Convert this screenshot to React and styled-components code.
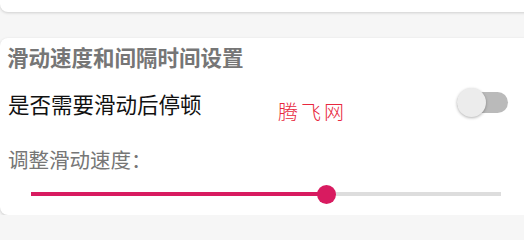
import React, { useState } from "react";
import styled, { createGlobalStyle } from "styled-components";

const GlobalStyle = createGlobalStyle`
  html, body {
    margin: 0;
    padding: 0;
    overflow: hidden;
    background: #f6f6f6;
    font-family: "Noto Sans CJK SC", "Noto Sans", sans-serif;
  }
`;

const Page = styled.div`
  display: flex;
  flex-direction: column;
  gap: 26px;
  width: 548px;
`;

const TopCard = styled.div`
  height: 12px;
  background: #ffffff;
  border-radius: 0 0 8px 8px;
  box-shadow: 0 1px 3px rgba(0, 0, 0, 0.16);
`;

const Card = styled.section`
  position: relative;
  background: #ffffff;
  border-radius: 8px;
  box-shadow: 0 1px 3px rgba(0, 0, 0, 0.18);
  padding: 4px 40px 11px 7px;
  display: flex;
  flex-direction: column;
`;

const Title = styled.div`
  font-size: 21.5px;
  line-height: 30px;
  font-weight: 700;
  color: #767676;
`;

const Row = styled.div`
  display: flex;
  align-items: center;
  justify-content: space-between;
  height: 40px;
  margin-top: 12px;
  padding-left: 1px;
`;

const Label = styled.span`
  font-size: 21.5px;
  line-height: 30px;
  color: #111111;
`;

const SwitchTrack = styled.button`
  position: relative;
  width: 51px;
  height: 21px;
  margin-bottom: 4px;
  padding: 0;
  border: none;
  border-radius: 11px;
  background: ${(p) => (p.$on ? "#f08eb0" : "#bababa")};
  cursor: pointer;
`;

const SwitchThumb = styled.span`
  position: absolute;
  top: -4px;
  left: ${(p) => (p.$on ? "22px" : "0")};
  width: 29px;
  height: 29px;
  border-radius: 50%;
  background: ${(p) => (p.$on ? "#d81b60" : "#ececec")};
  box-shadow: 0 1px 3px rgba(0, 0, 0, 0.3);
`;

const SubLabel = styled.div`
  font-size: 20.5px;
  line-height: 30px;
  color: #767676;
  margin-top: 20px;
  padding-left: 1px;
`;

const SliderBox = styled.div`
  position: relative;
  width: 470px;
  height: 20px;
  margin: 10px 0 0 24px;
  display: flex;
  align-items: center;
`;

const Track = styled.div`
  position: relative;
  width: 100%;
  height: 4px;
  background: #dddddd;
`;

const Fill = styled.div`
  height: 100%;
  background: #d81b60;
`;

const Thumb = styled.div`
  position: absolute;
  top: 50%;
  width: 19px;
  height: 19px;
  margin: -9.5px 0 0 -9.5px;
  border-radius: 50%;
  background: #d81b60;
`;

const Watermark = styled.span`
  position: absolute;
  left: 278px;
  top: 63px;
  font-size: 20px;
  line-height: 22px;
  letter-spacing: 3px;
  font-weight: 300;
  color: #e8283e;
  pointer-events: none;
`;

export default function App() {
  const [pause, setPause] = useState(false);
  const value = 62.9;
  return (
    <>
      <GlobalStyle />
      <Page>
        <TopCard />
        <Card>
          <Title>滑动速度和间隔时间设置</Title>
          <Row>
            <Label>是否需要滑动后停顿</Label>
            <SwitchTrack $on={pause} onClick={() => setPause(!pause)} aria-label="toggle">
              <SwitchThumb $on={pause} />
            </SwitchTrack>
          </Row>
          <SubLabel>调整滑动速度：</SubLabel>
          <SliderBox>
            <Track>
              <Fill style={{ width: `${value}%` }} />
            </Track>
            <Thumb style={{ left: `${value}%` }} />
          </SliderBox>
          <Watermark>腾飞网</Watermark>
        </Card>
      </Page>
    </>
  );
}
